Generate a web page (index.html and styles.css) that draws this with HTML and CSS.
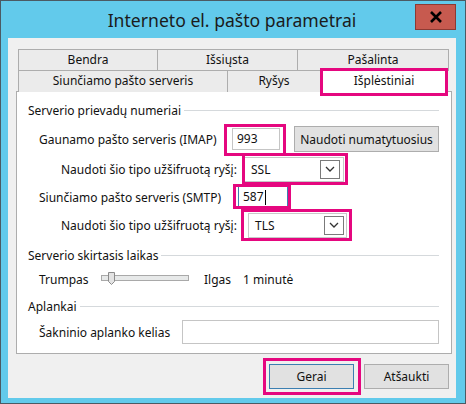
FILE: index.html
```html
<!DOCTYPE html>
<html>
<head>
  <link rel="stylesheet" href="styles.css">
</head>
<body>
  <div class="window">
    <div class="titlebar">
      <span></span>
      <h1 class="title">Interneto el. pašto parametrai</h1>
      <button class="close" aria-label="Uždaryti">
        <svg width="14" height="12" viewBox="0 0 14 12"><path d="M2 1L12 11M12 1L2 11" stroke="#000" stroke-width="2.6" fill="none"/></svg>
      </button>
    </div>

    <div class="client">
      <div class="tabs">
        <div class="tab-row">
          <div class="tab t-bendra">Bendra</div>
          <div class="tab t-issiusta">Išsiųsta</div>
          <div class="tab t-pasalinta">Pašalinta</div>
        </div>
        <div class="tab-row second">
          <div class="tab t-siunciamo">Siunčiamo pašto serveris</div>
          <div class="tab t-rysys">Ryšys</div>
          <div class="tab selected mark">Išplėstiniai</div>
        </div>
      </div>

      <div class="panel">
        <div class="group-title">Serverio prievadų numeriai</div>

        <div class="row r-imap">
          <label class="lbl">Gaunamo pašto serveris (IMAP)</label>
          <div class="input port mark m-imap">993</div>
          <button class="btn btn-default-port">Naudoti numatytuosius</button>
        </div>

        <div class="row r-enc1">
          <label class="lbl">Naudoti šio tipo užšifruotą ryšį:</label>
          <div class="select mark m-ssl">
            <span>SSL</span>
            <span class="arrow">
              <svg width="10" height="6" viewBox="0 0 10 6"><path d="M1 1l4 4l4-4" stroke="#333" stroke-width="1.3" fill="none"/></svg>
            </span>
          </div>
        </div>

        <div class="row r-smtp">
          <label class="lbl">Siunčiamo pašto serveris (SMTP)</label>
          <div class="input port focused mark m-smtp">587<span class="caret"></span></div>
        </div>

        <div class="row r-enc2">
          <label class="lbl">Naudoti šio tipo užšifruotą ryšį:</label>
          <div class="select wide mark m-tls">
            <span>TLS</span>
            <span class="arrow">
              <svg width="10" height="6" viewBox="0 0 10 6"><path d="M1 1l4 4l4-4" stroke="#333" stroke-width="1.3" fill="none"/></svg>
            </span>
          </div>
        </div>

        <div class="group-title g-timeout">Serverio skirtasis laikas</div>

        <div class="row r-slider">
          <span class="lbl">Trumpas</span>
          <svg class="slider" width="88" height="14" viewBox="0 0 88 14">
            <rect x="0.5" y="3.5" width="87" height="5" fill="#e7e9e9" stroke="#a9a9a9"/>
            <path d="M7.5 0.5h6v9l-3 3l-3-3z" fill="#e3e3e3" stroke="#8c8c8c"/>
          </svg>
          <span class="lbl-long">Ilgas</span>
          <span>1 minutė</span>
        </div>

        <div class="group-title g-folders">Aplankai</div>

        <div class="row r-root">
          <label class="lbl">Šakninio aplanko kelias</label>
          <div class="input path"></div>
        </div>
      </div>

      <div class="actions">
        <button class="btn btn-ok mark m-ok">Gerai</button>
        <button class="btn btn-cancel">Atšaukti</button>
      </div>
    </div>
  </div>
</body>
</html>
```

FILE: styles.css
```css
:root {
  --frame: #62caeb;
  --frame-edge: #4b5a63;
  --face: #f0f0f0;
  --line: #adadad;
  --text: #111111;
  --pink: #e5077f;
}

* {
  box-sizing: border-box;
}

body {
  margin: 0;
  font-family: "Segoe UI", "Noto Sans", sans-serif;
  font-size: 12px;
  color: var(--text);
}

.window {
  width: 466px;
  height: 404px;
  background: var(--frame);
  border: 1px solid var(--frame-edge);
  padding: 0 9px 5px 7px;
}

/* Title bar */
.titlebar {
  height: 37px;
  display: grid;
  grid-template-columns: 1fr auto 1fr;
  align-items: start;
}

.title {
  margin: 0;
  padding-top: 7px;
  font-size: 17.6px;
  font-weight: 400;
  color: #1b1b1b;
  line-height: 24px;
}

.close {
  justify-self: end;
  margin-top: 3px;
  width: 41px;
  height: 26px;
  border: 1px solid #8c3a33;
  background: #c75a4f;
  padding: 0;
  display: flex;
  align-items: center;
  justify-content: center;
}

/* Client area */
.client {
  height: 360px;
  background: var(--face);
  padding: 11px 5px 0 8px;
}

.tabs {
  padding-left: 2px;
}

.tab-row {
  display: flex;
  align-items: flex-start;
  height: 21px;
}

.tab {
  height: 22px;
  border: 1px solid var(--line);
  border-bottom: none;
  background: #ebebeb;
  text-align: center;
  line-height: 20px;
  margin-left: -1px;
}

.tab:first-child {
  margin-left: 0;
}

.t-bendra { width: 140px; }
.t-issiusta { width: 141px; }
.t-pasalinta { width: 152px; }
.t-siunciamo { width: 210px; }
.t-rysys { width: 94px; }

.tab.selected {
  position: relative;
  z-index: 1;
  width: 128px;
  height: 24px;
  margin-top: -2px;
  background: #ffffff;
  line-height: 24px;
}

/* Annotation boxes */
.mark {
  position: relative;
}

.mark::after {
  content: "";
  position: absolute;
  border: 3px solid var(--pink);
  pointer-events: none;
  z-index: 2;
}

.tab.selected::after { inset: -1px -1px -4px -1px; }
.m-imap::after { inset: -5px -7px -7px -9px; }
.m-ssl::after { inset: -5px -5px -4px -3px; }
.m-smtp::after { inset: -3px -4px -2px -6px; }
.m-tls::after { inset: -5px -6px -4px -8px; }
.m-ok::after { inset: -7px -8px -7px -7px; }

/* Panel */
.panel {
  width: 436px;
  height: 263px;
  background: #ffffff;
  border: 1px solid var(--line);
  padding: 9px 12px 0 0;
}

.group-title {
  display: flex;
  align-items: center;
  height: 18px;
  padding-left: 11px;
}

.group-title::after {
  content: "";
  flex: 1;
  height: 1px;
  margin-left: 3px;
  background: #d5d9dc;
}

.g-timeout { margin-top: 8px; }
.g-folders { margin-top: 9px; }

.row {
  display: flex;
  align-items: center;
  padding-left: 22px;
}

.r-imap { margin-top: 7px; height: 26px; }
.r-enc1 { margin-top: 4px; height: 26px; padding-left: 44px; }
.r-smtp { margin-top: 4px; height: 22px; }
.r-enc2 { margin-top: 4px; height: 26px; padding-left: 44px; }
.r-slider { margin-top: 6px; height: 18px; }
.r-root { margin-top: 5px; height: 24px; }

.r-imap .lbl { width: 193px; }
.r-enc1 .lbl { width: 183px; }
.r-smtp .lbl { width: 199px; }
.r-enc2 .lbl { width: 187px; }
.r-slider .lbl { width: 62px; }
.r-root .lbl { width: 143px; }

.lbl-long { width: 39px; margin-left: 15px; }

.input {
  height: 22px;
  border: 1px solid #c5c5c5;
  background: #ffffff;
  padding-left: 4px;
  line-height: 20px;
}

.port { width: 48px; }

.focused {
  width: 50px;
  border-color: #3c7fb1;
  display: flex;
  align-items: center;
}

.caret {
  width: 1px;
  height: 15px;
  margin-left: 1px;
  background: #000000;
}

.path {
  width: 258px;
  height: 24px;
}

.select {
  width: 100px;
  height: 25px;
  border: 1px solid #c8c8c8;
  background: #ffffff;
  display: flex;
  align-items: center;
  justify-content: space-between;
  padding: 0 3px 0 6px;
}

.select.wide {
  width: 99px;
  padding-right: 2px;
}

.arrow {
  width: 20px;
  height: 19px;
  border: 1px solid #7a7a7a;
  display: flex;
  align-items: center;
  justify-content: center;
}

.slider {
  display: block;
}

/* Buttons */
.btn {
  font: inherit;
  color: var(--text);
  background: #e1e1e1;
  border: 1px solid var(--line);
  padding: 0;
}

.btn-default-port {
  width: 145px;
  height: 26px;
  margin-left: 14px;
}

.actions {
  display: flex;
  justify-content: flex-end;
  gap: 10px;
  margin-top: 10px;
  padding-right: 2px;
}

.btn-ok,
.btn-cancel {
  width: 85px;
  height: 25px;
}

.btn-ok {
  border-color: #3c7fb1;
}
```
